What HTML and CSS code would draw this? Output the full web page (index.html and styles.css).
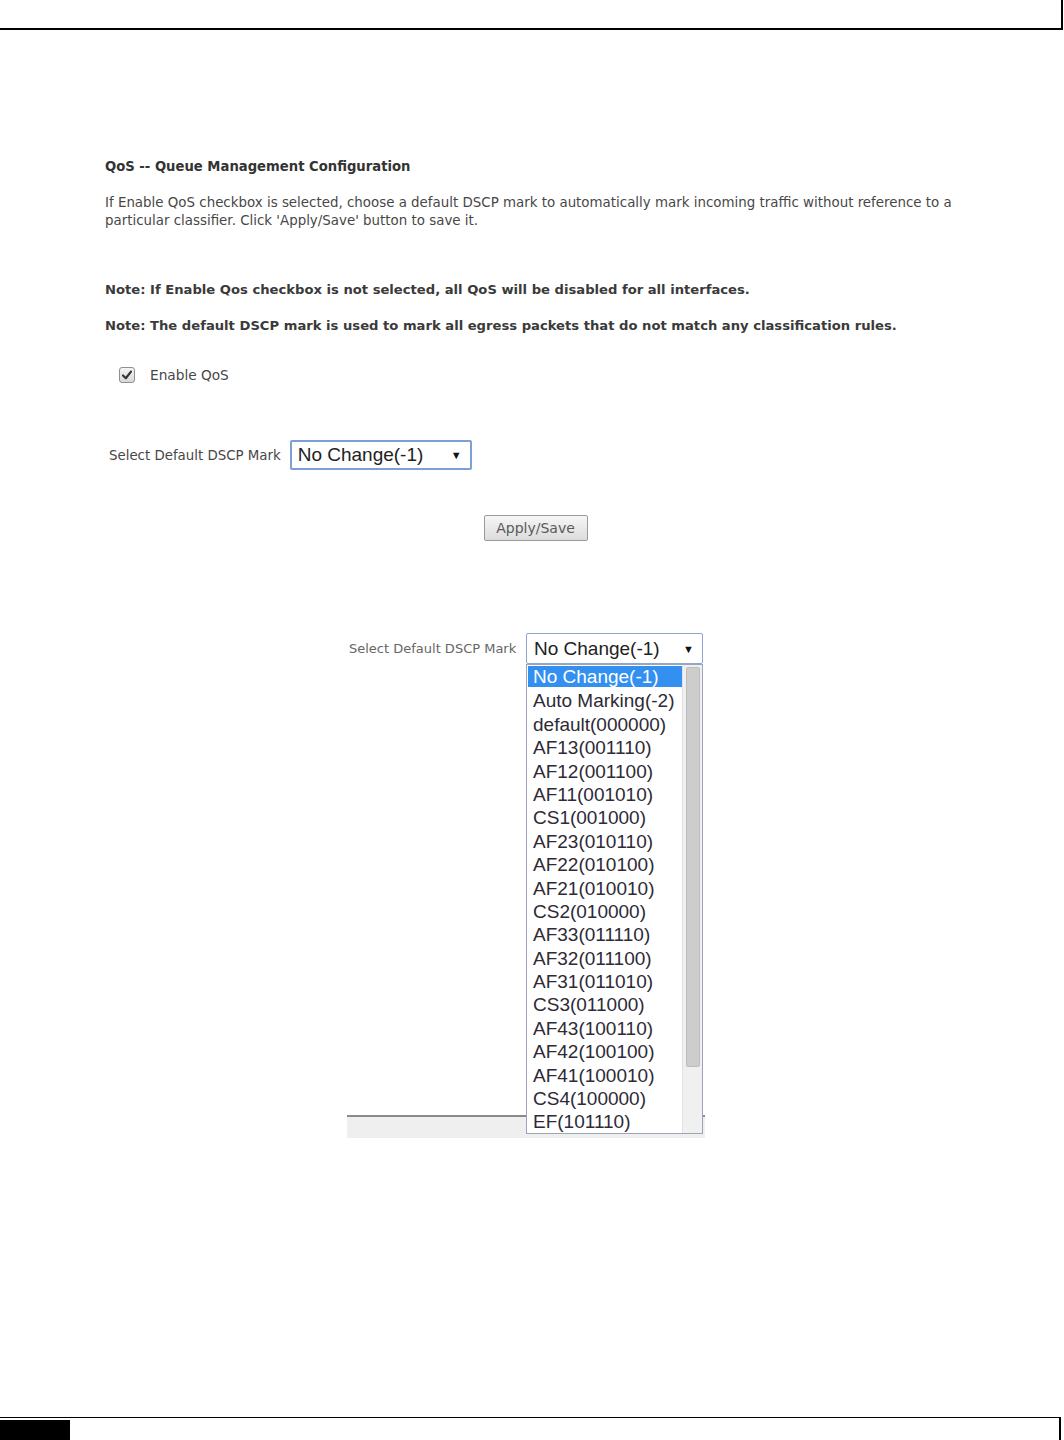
FILE: index.html
```html
<!DOCTYPE html>
<html>
<head>
<meta charset="utf-8">
<link rel="stylesheet" href="styles.css">
</head>
<body>
<div class="page">
  <div class="header"></div>
  <div class="content">
    <div class="title">QoS -- Queue Management Configuration</div>
    <p class="para">If Enable QoS checkbox is selected, choose a default DSCP mark to automatically mark incoming traffic without reference to a particular classifier. Click 'Apply/Save' button to save it.</p>
    <div class="note note1">Note: If Enable Qos checkbox is not selected, all QoS will be disabled for all interfaces.</div>
    <div class="note note2">Note: The default DSCP mark is used to mark all egress packets that do not match any classification rules.</div>
    <div class="check-row">
      <span class="checkbox"><svg width="12" height="12" viewBox="0 0 12 12"><path d="M2 6.5 L4.8 9.2 L10 2.6" fill="none" stroke="#333" stroke-width="2.2" stroke-linecap="round" stroke-linejoin="round"/></svg></span>
      <span class="check-label">Enable QoS</span>
    </div>
    <div class="select-row">
      <span class="sel-label">Select Default DSCP Mark</span>
      <div class="select"><span>No Change(-1)</span><span class="arrow">&#9660;</span></div>
    </div>
    <div class="btn-row"><button class="btn">Apply/Save</button></div>
  </div>
  <div class="shot">
    <div class="shot-row">
      <span class="shot-label">Select Default DSCP Mark</span>
      <div class="select select2"><span>No Change(-1)</span><span class="arrow">&#9660;</span></div>
    </div>
    <div class="shot-fill"></div>
    <div class="shot-foot"></div>
    <div class="list">
      <div class="items">
        <div class="item selected">No Change(-1)</div>
        <div class="item">Auto Marking(-2)</div>
        <div class="item">default(000000)</div>
        <div class="item">AF13(001110)</div>
        <div class="item">AF12(001100)</div>
        <div class="item">AF11(001010)</div>
        <div class="item">CS1(001000)</div>
        <div class="item">AF23(010110)</div>
        <div class="item">AF22(010100)</div>
        <div class="item">AF21(010010)</div>
        <div class="item">CS2(010000)</div>
        <div class="item">AF33(011110)</div>
        <div class="item">AF32(011100)</div>
        <div class="item">AF31(011010)</div>
        <div class="item">CS3(011000)</div>
        <div class="item">AF43(100110)</div>
        <div class="item">AF42(100100)</div>
        <div class="item">AF41(100010)</div>
        <div class="item">CS4(100000)</div>
        <div class="item">EF(101110)</div>
      </div>
      <div class="scroll"><div class="thumb"></div></div>
    </div>
  </div>
  <div class="footer"><div class="tab"></div></div>
</div>
</body>
</html>
```

FILE: styles.css
```css
html, body {
  margin: 0;
  padding: 0;
  background: #fff;
}
.page {
  display: flex;
  flex-direction: column;
  min-height: 1440px;
  font-family: "DejaVu Sans", Verdana, sans-serif;
  color: #3c3c3c;
}
.header {
  height: 28px;
  width: 1061px;
  border-bottom: 2px solid #000;
  border-right: 2px solid #000;
}
.content {
  margin-left: 105px;
  width: 861px;
  padding-top: 128px;
}
.title {
  font-size: 13.2px;
  font-weight: bold;
  line-height: 18px;
  color: #333;
}
.para {
  margin: 18px 0 0 0;
  font-size: 13.4px;
  line-height: 18px;
  color: #474747;
  width: 858px;
}
.note {
  font-size: 13.15px;
  font-weight: bold;
  line-height: 18px;
  color: #3a3a3a;
}
.note1 { margin-top: 51px; }
.note2 { margin-top: 18px; }
.check-row {
  margin-top: 31px;
  margin-left: 14px;
  display: flex;
  align-items: center;
  gap: 15px;
  height: 18px;
}
.checkbox {
  width: 14px;
  height: 14px;
  border: 1px solid #8f8f8f;
  border-radius: 3px;
  background: linear-gradient(#f4f4f4, #d8d8d8);
  display: flex;
  align-items: center;
  justify-content: center;
}
.check-label {
  font-size: 13.7px;
  color: #474747;
}
.select-row {
  margin-top: 56px;
  margin-left: 4px;
  display: flex;
  align-items: center;
  gap: 9px;
}
.sel-label {
  font-size: 13.35px;
  color: #474747;
}
.select {
  box-sizing: border-box;
  width: 182px;
  height: 30px;
  border: 2px solid #7d9fd8;
  border-radius: 2px;
  display: flex;
  align-items: center;
  justify-content: space-between;
  padding: 0 8px 0 6px;
  font-family: "Liberation Sans", Arial, sans-serif;
  font-size: 19px;
  color: #222;
  background: #fff;
}
.arrow {
  font-size: 11px;
  color: #111;
}
.btn-row {
  margin-top: 45px;
  display: flex;
  justify-content: center;
}
.btn {
  box-sizing: border-box;
  width: 104px;
  height: 26px;
  border: 1px solid #9a9a9a;
  border-radius: 2px;
  background: linear-gradient(#f6f6f6, #dcdcdc);
  font-family: "DejaVu Sans", Verdana, sans-serif;
  font-size: 14px;
  color: #5a5a5a;
  padding: 0;
}
.shot {
  position: relative;
  margin-top: 92px;
  margin-left: 347px;
  width: 358px;
  height: 505px;
  display: flex;
  flex-direction: column;
}
.shot-row {
  display: flex;
  align-items: center;
  height: 31px;
}
.shot-label {
  margin-left: 2px;
  width: 177px;
  font-size: 13px;
  color: #666;
  white-space: nowrap;
}
.select2 {
  width: 177px;
  height: 31px;
  border: 1px solid #8ea6cf;
  padding: 0 8px 0 7px;
  font-size: 19px;
}
.shot-fill {
  flex: 1;
}
.shot-foot {
  height: 21px;
  border-top: 2px solid #8a8a8a;
  background: #efefef;
}
.list {
  position: absolute;
  left: 179px;
  top: 31px;
  width: 177px;
  height: 470px;
  box-sizing: border-box;
  border: 1px solid #9aa6b6;
  background: #fff;
  display: flex;
}
.items {
  flex: 1;
  padding: 1px 0 0 1px;
}
.item {
  height: 23.4px;
  line-height: 23.4px;
  font-family: "Liberation Sans", Arial, sans-serif;
  font-size: 19px;
  color: #2e2a36;
  padding-left: 5px;
  white-space: nowrap;
}
.item.selected {
  background: #3390f0;
  color: #fff;
  height: 21px;
  line-height: 21px;
  margin-bottom: 2.4px;
}
.scroll {
  width: 20px;
  background: #f0f0f0;
  border-left: 1px solid #e2e2e2;
  padding: 2px 2px 0 3px;
  box-sizing: border-box;
}
.thumb {
  height: 400px;
  background: #cdcdcd;
  border: 1px solid #bdbdbd;
  border-radius: 2px;
  box-sizing: border-box;
}
.footer {
  margin-top: auto;
  height: 23px;
  width: 1061px;
  border-top: 1px solid #000;
  border-right: 2px solid #000;
  padding-top: 2px;
  box-sizing: border-box;
}
.tab {
  width: 70px;
  height: 21px;
  background: #000;
}
```
